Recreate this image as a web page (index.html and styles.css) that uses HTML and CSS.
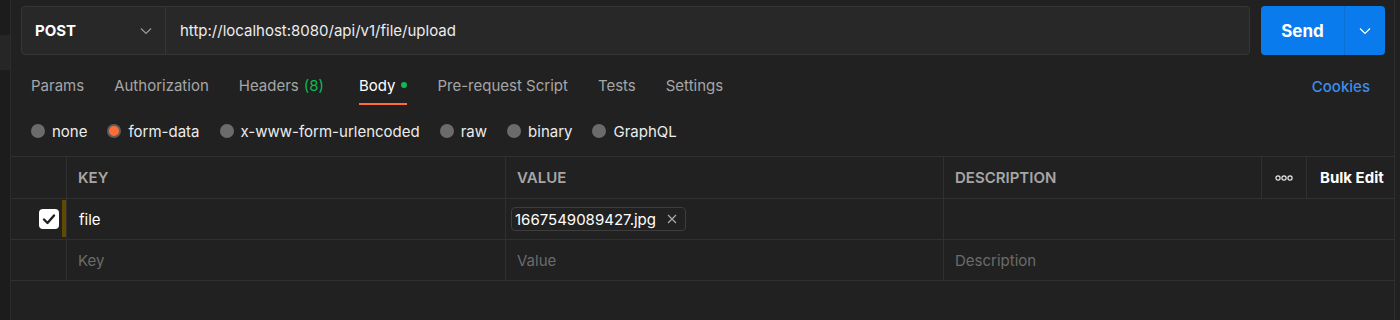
FILE: index.html
```html
<!DOCTYPE html>
<html>
<head>
<meta charset="utf-8">
<link rel="stylesheet" href="styles.css">
</head>
<body>
<div class="app">
  <div class="side"><div class="side-block"></div></div>
  <div class="main">
    <div class="req-row">
      <div class="url-box">
        <div class="method">
          <span>POST</span>
          <svg class="chev" width="12" height="8" viewBox="0 0 12 8"><polyline points="1,1.5 6,6.5 11,1.5" fill="none" stroke="#9a9a9a" stroke-width="1.2"/></svg>
        </div>
        <div class="url">http://localhost:8080/api/v1/file/upload</div>
      </div>
      <div class="send">
        <div class="send-main">Send</div>
        <div class="send-drop"><svg width="12" height="8" viewBox="0 0 12 8"><polyline points="1,1.5 6,6.5 11,1.5" fill="none" stroke="#ffffff" stroke-width="1.2"/></svg></div>
      </div>
    </div>

    <div class="tabs">
      <div class="tab">Params</div>
      <div class="tab">Authorization</div>
      <div class="tab">Headers<span class="count">(8)</span></div>
      <div class="tab active">Body<span class="dot"></span></div>
      <div class="tab">Pre-request Script</div>
      <div class="tab">Tests</div>
      <div class="tab">Settings</div>
      <div class="tab-spacer"></div>
      <div class="cookies">Cookies</div>
    </div>

    <div class="radios">
      <div class="radio"><span class="circle"></span>none</div>
      <div class="radio"><span class="circle on"></span>form-data</div>
      <div class="radio"><span class="circle"></span>x-www-form-urlencoded</div>
      <div class="radio"><span class="circle"></span>raw</div>
      <div class="radio"><span class="circle"></span>binary</div>
      <div class="radio"><span class="circle"></span>GraphQL</div>
    </div>

    <div class="table">
      <div class="cell hd"></div>
      <div class="cell hd vl">KEY</div>
      <div class="cell hd vl">VALUE</div>
      <div class="cell hd vl">DESCRIPTION</div>
      <div class="cell hd vl center"><svg width="18" height="6" viewBox="0 0 18 6"><circle cx="3" cy="3" r="2.1" fill="none" stroke="#e6e6e6" stroke-width="1.2"/><circle cx="9" cy="3" r="2.1" fill="none" stroke="#e6e6e6" stroke-width="1.2"/><circle cx="15" cy="3" r="2.1" fill="none" stroke="#e6e6e6" stroke-width="1.2"/></svg></div>
      <div class="cell hd vl bulk">Bulk Edit</div>

      <div class="cell chk"><span class="checkbox"><svg width="14" height="12" viewBox="0 0 14 12"><polyline points="2,6.5 5.5,10 12,2.5" fill="none" stroke="#212121" stroke-width="2.4" stroke-linecap="round" stroke-linejoin="round"/></svg></span><span class="drag"></span></div>
      <div class="cell vl txt">file</div>
      <div class="cell vl"><span class="chip">1667549089427.jpg<svg width="10" height="10" viewBox="0 0 10 10"><path d="M1 1L9 9M9 1L1 9" stroke="#a6a6a6" stroke-width="1.3"/></svg></span></div>
      <div class="cell vl span3"></div>

      <div class="cell"></div>
      <div class="cell vl ph">Key</div>
      <div class="cell vl ph">Value</div>
      <div class="cell vl ph span3">Description</div>
    </div>
  </div>
  <div class="edge"></div>
</div>
</body>
</html>
```

FILE: styles.css
```css
* { box-sizing: border-box; }
html, body { margin: 0; padding: 0; }
body {
  background: #212121;
  font-family: Inter, "Noto Sans", "Liberation Sans", sans-serif;
  font-size: 15px;
  color: #e6e6e6;
  width: 1400px;
  height: 320px;
  overflow: hidden;
}
.app { display: flex; height: 320px; }
.side {
  width: 11px;
  background: #1c1c1c;
  border-right: 1px solid #2c2c2c;
  padding-top: 35px;
}
.side-block { height: 35px; background: #262626; }
.main { flex: 1; display: flex; flex-direction: column; min-width: 0; }
.edge { width: 6px; border-left: 1px solid #2e2e2e; background: #212121; }

.req-row {
  display: flex;
  gap: 11px;
  padding: 6px 9px 0 10px;
  height: 55px;
}
.url-box {
  flex: 1;
  display: flex;
  background: #282828;
  border: 1px solid #363636;
  border-radius: 4px;
  height: 49px;
}
.method {
  width: 144px;
  display: flex;
  align-items: center;
  justify-content: space-between;
  padding: 0 13px 0 13px;
  border-right: 1px solid #363636;
  font-weight: 700;
  color: #ffffff;
}
.chev { display: block; }
.url {
  display: flex;
  align-items: center;
  padding-left: 14px;
  color: #ececec;
}
.send {
  width: 124px;
  height: 49px;
  display: flex;
  background: #097bed;
  border-radius: 4px;
}
.send-main {
  width: 84px;
  display: flex;
  align-items: center;
  justify-content: center;
  font-size: 17px;
  font-weight: 700;
  color: #ffffff;
  border-right: 1px solid #0a6fd4;
}
.send-drop { flex: 1; display: flex; align-items: center; justify-content: center; }

.tabs {
  display: flex;
  align-items: stretch;
  gap: 30px;
  margin-top: 10px;
  height: 40px;
  padding: 0 24px 0 20px;
}
.tab {
  display: flex;
  align-items: center;
  padding-top: 2px;
  border-bottom: 2px solid transparent;
  color: #a6a6a6;
  white-space: nowrap;
}
.tab.active { color: #ffffff; border-bottom-color: #ff6c37; margin-left: 5px; }
.count { color: #0cbb52; margin-left: 5px; }
.dot {
  width: 6px; height: 6px; border-radius: 50%;
  background: #0cbb52;
  margin-left: 6px;
}
.tab-spacer { flex: 1; }
.cookies {
  display: flex; align-items: center; padding-top: 2px;
  color: #3d8eea; font-weight: 500;
}

.radios {
  display: flex;
  align-items: center;
  gap: 20px;
  height: 28px;
  margin-top: 12px;
  padding-left: 20px;
}
.radio { display: flex; align-items: center; gap: 7px; color: #ececec; }
.circle {
  width: 14px; height: 14px; border-radius: 50%;
  background: #6b6b6b;
}
.circle.on { background: #ff6c37; border: 2px solid #5e5e5e; }

.table {
  margin-top: 11px;
  display: grid;
  grid-template-columns: 55px 439px 438px 318px 45px 1fr;
  grid-template-rows: 42px 41px 41px;
  border-top: 1px solid #303030;
}
.cell {
  border-bottom: 1px solid #303030;
  display: flex;
  align-items: center;
  padding-left: 11px;
  position: relative;
  min-width: 0;
}
.vl { border-left: 1px solid #303030; }
.hd { color: #a6a6a6; font-weight: 600; }
.center { justify-content: center; padding-left: 0; }
.bulk { color: #ffffff; font-weight: 700; padding-left: 13px; }
.span3 { grid-column: 4 / 7; }
.chk { padding-left: 28px; }
.checkbox {
  width: 20px; height: 20px;
  background: #ffffff;
  border-radius: 4px;
  display: flex; align-items: center; justify-content: center;
}
.drag {
  position: absolute;
  right: 0;
  top: 1px;
  bottom: 2px;
  width: 4px;
  background: #634800;
}
.txt { color: #ffffff; padding-left: 12px; }
.chip {
  display: inline-flex;
  align-items: center;
  gap: 11px;
  height: 24px;
  margin-left: -6px;
  padding: 0 8px 0 3px;
  border: 1px solid #3d3d3d;
  border-radius: 4px;
  color: #ffffff;
}
.ph { color: #6b6b6b; }
```
